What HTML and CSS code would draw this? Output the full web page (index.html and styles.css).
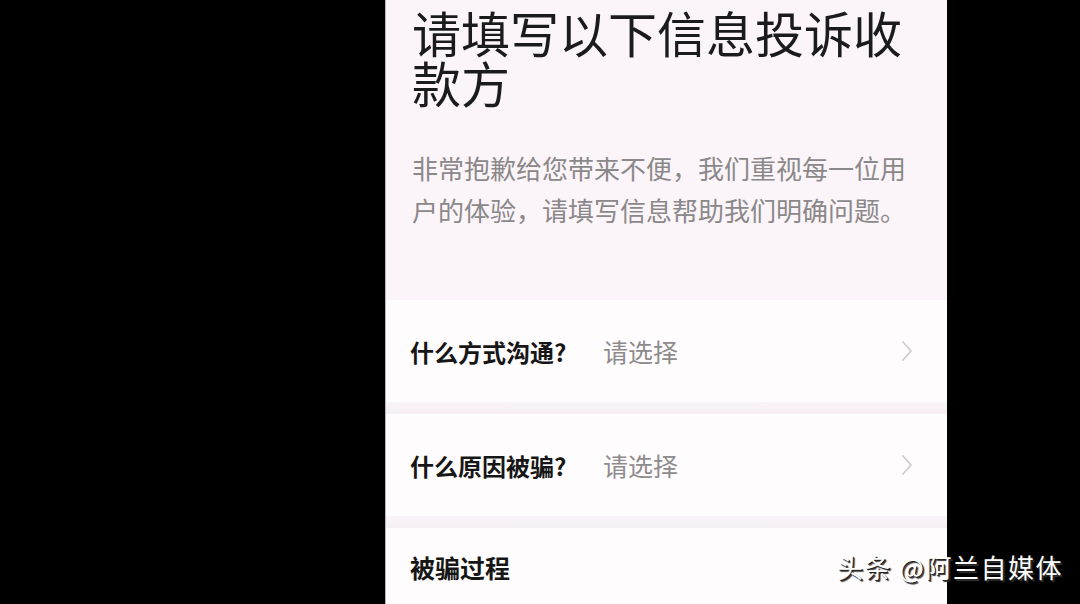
FILE: index.html
```html
<!DOCTYPE html>
<html lang="zh-CN">
<head>
  <meta charset="UTF-8" />
  <meta name="viewport" content="width=device-width, initial-scale=1" />
  <title>投诉收款方</title>
  <link rel="stylesheet" href="styles.css">
</head>
<body>
  <div class="stage">
    <!-- Phone screen -->
    <div class="screen">
      <div class="intro">
        <h1 class="title">请填写以下信息投诉收<br>款方</h1>
        <p class="desc">非常抱歉给您带来不便，我们重视每一位用户的体验，请填写信息帮助我们明确问题。</p>
      </div>

      <div class="row">
        <span class="label">什么方式沟通?</span>
        <span class="value">请选择</span>
        <svg class="arrow" viewBox="0 0 12 22" width="12" height="22">
          <polyline points="2,2 10,11 2,20" fill="none" stroke="#cfcbce" stroke-width="1.8" stroke-linecap="round" stroke-linejoin="round"/>
        </svg>
      </div>
      <div class="gap"></div>
      <div class="row">
        <span class="label">什么原因被骗?</span>
        <span class="value">请选择</span>
        <svg class="arrow" viewBox="0 0 12 22" width="12" height="22">
          <polyline points="2,2 10,11 2,20" fill="none" stroke="#cfcbce" stroke-width="1.8" stroke-linecap="round" stroke-linejoin="round"/>
        </svg>
      </div>
      <div class="gap"></div>
      <div class="row row-text">
        <span class="label">被骗过程</span>
      </div>
    </div>
  </div>

  <!-- Channel watermark -->
  <div class="mark">头条 @阿兰自媒体</div>
</body>
</html>
```

FILE: styles.css
```css
/* Black backdrop with the phone screen in it */
body {
  margin: 0;
  padding: 0;
  background: #000;
  font-family: "Noto Sans CJK SC", "Noto Sans", sans-serif;
  overflow: hidden;
  position: relative;
  height: 604px;
}
.stage {
  display: flex;
  height: 604px;
}
.screen {
  margin-left: 385px;
  width: 561px;
  height: 604px;
  overflow: hidden;
  background: #fbf5f9;
  border-left: 1px solid #b9b6b8;
  display: flex;
  flex-direction: column;
}

/* Heading block */
.intro {
  padding: 7px 10px 0 26px;
  height: 300px;
  flex-shrink: 0;
  box-sizing: border-box;
}
.title {
  margin: 0;
  font-size: 49px;
  line-height: 50px;
  font-weight: 400;
  color: #1b1b1b;
  white-space: nowrap;
}
.desc {
  margin: 40px 0 0;
  max-width: 500px;
  font-size: 26px;
  line-height: 42px;
  color: #8b888a;
}

/* Form rows */
.row {
  display: flex;
  align-items: center;
  height: 102px;
  flex-shrink: 0;
  padding: 0 34px 0 24px;
  background: #fffcfe;
}
.gap {
  height: 12px;
  flex-shrink: 0;
  background: linear-gradient(#f9f4f7, #f5eff3);
}
.label {
  font-size: 24px;
  font-weight: 700;
  color: #161616;
  width: 193px;
}
.value {
  flex: 1;
  font-size: 25px;
  color: #8e8b8d;
}
.arrow {
  display: block;
}
.row-text {
  align-items: flex-start;
  padding-top: 22px;
  height: auto;
  flex: 1;
}
.row-text .label {
  font-size: 25px;
  line-height: 34px;
}

/* Watermark in the corner */
.mark {
  position: absolute;
  left: 837px;
  top: 549px;
  font-size: 26px;
  line-height: 36px;
  color: #fff;
  text-shadow: 1px 1px 0 #222, 2px 2px 1px #333;
  letter-spacing: 1.5px;
}
```
